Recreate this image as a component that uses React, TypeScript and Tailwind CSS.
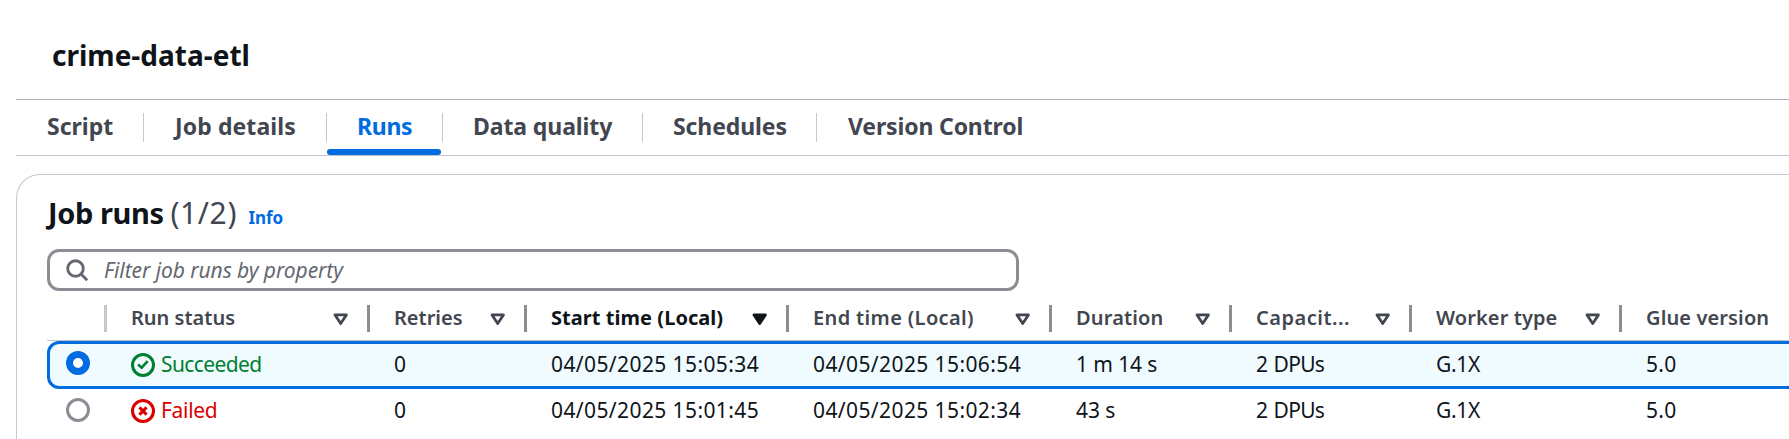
import type { ReactNode } from "react";

const tabs = [
  { label: "Script", box: "w-[128px] pl-[31px]", text: "tracking-normal" },
  { label: "Job details", box: "w-[183px] pl-[31px]", text: "tracking-[0.1px]" },
  { label: "Runs", box: "w-[116px] pl-[30px]", text: "tracking-[-0.3px]", active: true },
  { label: "Data quality", box: "w-[200px] pl-[30px]", text: "tracking-[-0.1px]" },
  { label: "Schedules", box: "w-[174px] pl-[30px]", text: "tracking-[-0.1px]" },
  { label: "Version Control", box: "w-[230px] pl-[31px]", text: "tracking-[-0.15px]" },
];

const columns = [
  { label: "Run status", width: "w-[263px]", text: "tracking-normal" },
  { label: "Retries", width: "w-[157px]", text: "tracking-normal" },
  { label: "Start time (Local)", width: "w-[262px]", text: "tracking-[0.05px]", sorted: true },
  { label: "End time (Local)", width: "w-[263px]", text: "tracking-[0.36px]" },
  { label: "Duration", width: "w-[180px]", text: "tracking-[0.15px]" },
  { label: "Capacit...", width: "w-[180px]", text: "tracking-[0.5px]" },
  { label: "Worker type", width: "w-[210px]", text: "tracking-[0.1px]" },
  { label: "Glue version", width: "w-[167px]", text: "tracking-[0.12px]", last: true },
];

const runs = [
  { ok: true, start: "04/05/2025 15:05:34", end: "04/05/2025 15:06:54", duration: "1 m 14 s" },
  { ok: false, start: "04/05/2025 15:01:45", end: "04/05/2025 15:02:34", duration: "43 s" },
];

function SortIcon({ filled }: { filled?: boolean }) {
  return (
    <svg width="15" height="13" viewBox="0 0 15 13" className="shrink-0">
      <path
        d="M2 1.9h11.4L7.7 10.5z"
        fill={filled ? "#0f141a" : "none"}
        stroke={filled ? "#0f141a" : "#424650"}
        strokeWidth="2.8"
        strokeLinejoin="round"
      />
    </svg>
  );
}

function StatusIcon({ ok }: { ok: boolean }) {
  return (
    <svg width="24" height="24" viewBox="0 0 16 16" fill="none" stroke="currentColor" strokeWidth="2" className="shrink-0">
      <circle cx="8" cy="8" r="7" />
      {ok ? <path d="M4.7 7.7l2.4 2.1 4-4.4" strokeWidth="1.8" /> : <path d="M5.6 5.6l4.8 4.8M10.4 5.6l-4.8 4.8" />}
    </svg>
  );
}

function Radio({ checked }: { checked: boolean }) {
  return checked ? (
    <span className="block size-6 rounded-full border-[7px] border-[#006ce0] bg-white" />
  ) : (
    <span className="block size-6 rounded-full border-3 border-[#8c8c94] bg-white" />
  );
}

function Cell({ width, children }: { width: string; children: ReactNode }) {
  return <div className={`${width} shrink-0 pl-[24px]`}>{children}</div>;
}

export default function App() {
  return (
    <div className="h-[439px] w-full overflow-hidden bg-white pl-4 font-['Noto_Sans',sans-serif] text-[#0f141a]">
      <header className="h-[100px] border-b border-[#aab7b8] pt-[35px] pl-9">
        <h1 className="text-[28px] leading-[40px] font-bold tracking-normal">crime-data-etl</h1>
      </header>

      <nav className="flex h-14 border-b border-[#c6c6cd]">
        {tabs.map((t, i) => (
          <div key={t.label} className={`relative flex shrink-0 items-start pt-3 ${t.box}`}>
            <span
              className={`text-[23px] leading-[28px] font-bold whitespace-nowrap ${t.text} ${t.active ? "text-[#006ce0]" : "text-[#424650]"}`}
            >
              {t.label}
            </span>
            {i < tabs.length - 1 && <span className="mt-px ml-auto h-[29px] w-px bg-[#c6c6cd]" />}
            {t.active && <span className="absolute bottom-0 left-0 h-1.5 w-[114px] rounded-full bg-[#006ce0]" />}
          </div>
        ))}
      </nav>

      <section className="mt-[18px] h-[300px] w-[1820px] rounded-tl-[24px] border-t border-l border-[#c6c6cd] pl-[30px]">
        <div className="flex h-[74px] items-baseline pt-[18px] pl-px leading-[40px] whitespace-nowrap">
          <h2 className="w-[122.5px] text-[29px] font-bold tracking-[-0.4px]">Job runs</h2>
          <span className="w-[78px] text-[30px] tracking-[0.6px] text-[#424650]">(1/2)</span>
          <span className="text-[17px] font-bold tracking-[-0.1px] text-[#006ce0]">Info</span>
        </div>

        <div className="flex h-[42px] w-[972px] items-center rounded-[12px] border-3 border-[#8c8c94] pl-4">
          <svg width="23" height="23" viewBox="0 0 23 23" fill="none" stroke="#656871" strokeWidth="2.9">
            <circle cx="9.5" cy="9.5" r="7.8" />
            <path d="M15 15l6.2 6.2" />
          </svg>
          <span className="ml-[15px] text-[21px] leading-[30px] tracking-[-0.07px] text-[#656871] italic">Filter job runs by property</span>
        </div>

        <div className="flex h-[50px] border-b border-[#c6c6cd] pt-[14px]">
          <div className="ml-[57px] h-[27px] w-[3px] shrink-0 bg-[#c6c6cd]" />
          {columns.map((c) => (
            <div key={c.label} className={`flex h-[27px] shrink-0 items-start pl-[24px] ${c.width}`}>
              <span
                className={`pt-px text-[20px] leading-[24px] whitespace-nowrap ${c.text} ${c.sorted ? "font-bold text-[#0f141a]" : "font-semibold text-[#424650]"}`}
              >
                {c.label}
              </span>
              {!c.last && (
                <>
                  <span className="mt-2 mr-[19.5px] ml-auto">
                    <SortIcon filled={c.sorted} />
                  </span>
                  <span className="h-[27px] w-[3px] shrink-0 bg-[#8c8c94]" />
                </>
              )}
            </div>
          ))}
        </div>

        {runs.map((r) => (
          <div
            key={r.start}
            className={`flex items-start text-[21px] leading-[30px] whitespace-nowrap ${
              r.ok
                ? "h-12 rounded-l-[12px] border-3 border-[#006ce0] bg-[#f0fbff] pt-[5px] pl-4"
                : "pt-[6px] pl-[19px]"
            }`}
          >
            <div className={`w-[41px] shrink-0 ${r.ok ? "pt-[2px]" : "pt-[3px]"}`}>
              <Radio checked={r.ok} />
            </div>
            <Cell width="w-[263px]">
              <div className={`flex ${r.ok ? "text-[#00802f]" : "text-[#db0000]"}`}>
                <span className="mt-1 mr-[6px]">
                  <StatusIcon ok={r.ok} />
                </span>
                {r.ok ? <span className="tracking-[-0.6px]">Succeeded</span> : <span className="tracking-[-0.3px]">Failed</span>}
              </div>
            </Cell>
            <Cell width="w-[157px]">0</Cell>
            <Cell width="w-[262px]">
              <span className="tracking-[0.4px]">{r.start}</span>
            </Cell>
            <Cell width="w-[263px]">
              <span className="tracking-[0.4px]">{r.end}</span>
            </Cell>
            <Cell width="w-[180px]">
              <span className="tracking-[-0.1px]">{r.duration}</span>
            </Cell>
            <Cell width="w-[180px]">
              <span className="tracking-[-0.7px] [word-spacing:1.5px]">2 DPUs</span>
            </Cell>
            <Cell width="w-[210px]">
              <span className="tracking-[-0.3px]">G.1X</span>
            </Cell>
            <Cell width="w-[200px]">
              <span className="tracking-[0.3px]">5.0</span>
            </Cell>
          </div>
        ))}
      </section>
    </div>
  );
}
